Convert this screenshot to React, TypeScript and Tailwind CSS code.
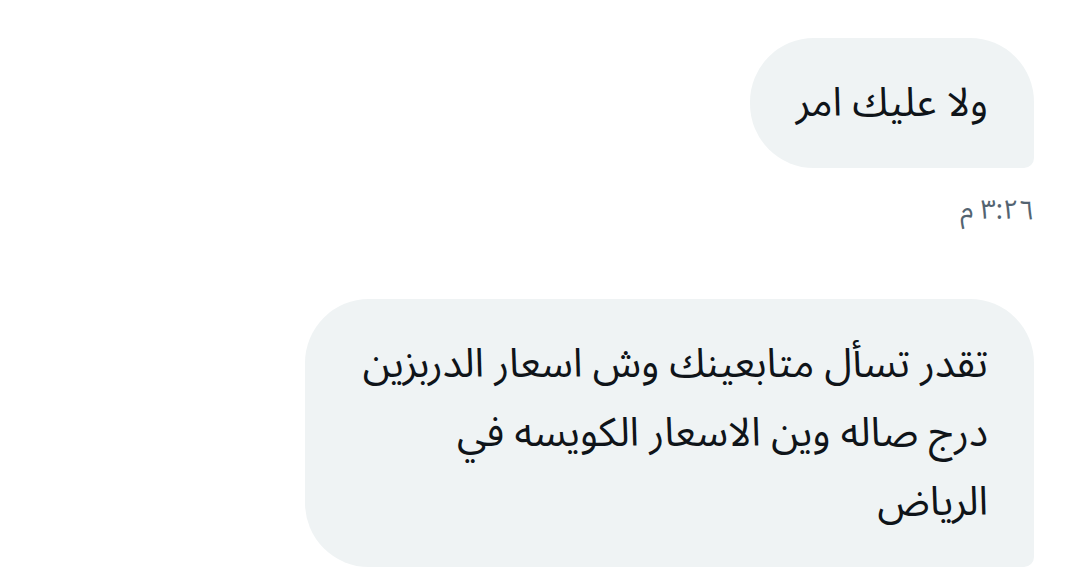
import React from 'react';

const font = { fontFamily: '"Noto Sans Arabic", "DejaVu Sans", "Noto Sans", sans-serif' };

function Bubble({ lines, className }: { lines: string[]; className?: string }) {
  return (
    <div
      dir="rtl"
      className={`bg-[#eff3f4] text-[#0f1419] text-[40px] leading-[69px] px-[46px] pt-[31px] pb-[30px] rounded-[64px] rounded-br-[10px] whitespace-nowrap ${className ?? ''}`}
    >
      {lines.map((l, i) => (
        <div key={i}>{l}</div>
      ))}
    </div>
  );
}

export default function App() {
  return (
    <div
      className="w-[1079px] h-[579px] bg-white overflow-hidden flex flex-col items-end pt-[38px] pr-[45px]"
      style={font}
    >
      <Bubble lines={['ولا عليك امر']} />
      <div dir="rtl" className="mt-[27px] text-[27px] leading-[32px] text-[#536471]">
        ٣:٢٦ م
      </div>
      <Bubble
        className="mt-[72px] w-[729px]"
        lines={['تقدر تسأل متابعينك وش اسعار الدربزين', 'درج صاله وين الاسعار الكويسه في', 'الرياض']}
      />
    </div>
  );
}
